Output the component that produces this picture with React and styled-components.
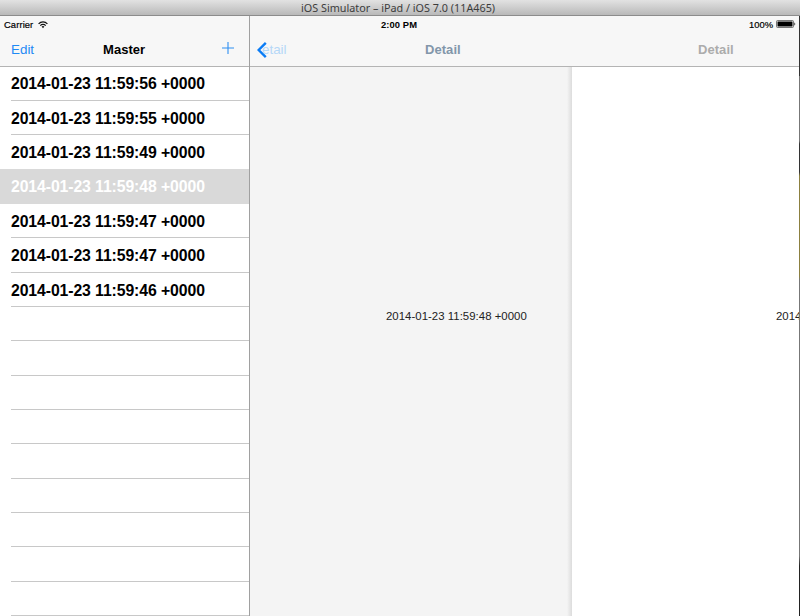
import styled, { createGlobalStyle } from "styled-components"

const GlobalStyle = createGlobalStyle`
  * {
    box-sizing: border-box;
  }

  body {
    margin: 0;
    overflow: hidden;
    background: #fff;
    font-family: "Liberation Sans", Arial, sans-serif;
    color: #000;
  }
`

const Window = styled.div`
  display: flex;
  flex-direction: column;
  width: 800px;
  height: 616px;
  overflow: hidden;
`

const TitleBar = styled.div`
  flex: none;
  height: 16px;
  padding-left: 301px;
  border-bottom: 1px solid #8c8c8c;
  background: linear-gradient(#e2e2e2, #b9b9b9);
  font-family: "Noto Sans", "Open Sans", sans-serif;
  font-size: 10.8px;
  line-height: 15px;
  white-space: nowrap;
  color: #3c3c3c;
`

const SplitView = styled.div`
  display: grid;
  grid-template-columns: 250px 549px 1px;
  flex: 1;
  min-height: 0;
`

const Panel = styled.section`
  display: flex;
  flex-direction: column;
  min-width: 0;
  min-height: 0;
  overflow: hidden;
  border-right: ${(props) => (props.$divided ? "1px solid #a0a0a0" : "none")};
`

const BarArea = styled.header`
  flex: none;
  height: 51px;
  border-bottom: 1px solid #b4b4b4;
  background: #f7f7f7;
`

const StatusBar = styled.div`
  display: flex;
  align-items: center;
  height: 17px;
  padding: 0 3px 0 4px;
  font-size: 9.4px;
  line-height: 17px;
  white-space: nowrap;

  svg {
    display: block;
  }
`

const Carrier = styled.span`
  margin-right: 5px;
  letter-spacing: 0.1px;
  -webkit-text-stroke: 0.2px #000;
`

const Time = styled.span`
  margin-left: 127px;
  font-weight: bold;
  letter-spacing: 0.1px;
`

const Battery = styled.span`
  display: flex;
  align-items: center;
  gap: 3px;
  margin-left: auto;
  -webkit-text-stroke: 0.2px #000;

  svg {
    margin-top: -1px;
  }
`

const NavBar = styled.div`
  display: flex;
  align-items: center;
  height: 33px;
  padding-left: ${(props) => props.$inset}px;
  font-size: 13px;
  line-height: 33px;
  white-space: nowrap;
`

const NavButton = styled.span`
  width: 92px;
  font-size: 13.4px;
  color: #1f8af5;
`

const NavTitle = styled.span`
  width: ${(props) => props.$width}px;
  font-weight: bold;
  letter-spacing: 0.05px;
  color: ${(props) => props.$color || "#000"};
`

const BackLabel = styled.span`
  width: 163px;
  margin-left: -5px;
  font-size: 13.4px;
  color: #b5d8f7;
`

const Table = styled.div`
  flex: 1;
  min-height: 0;
  overflow: hidden;
  background: #fff;
`

const RowList = styled.div`
  margin-top: -0.6px;
`

const Row = styled.div`
  height: 34.36px;
  padding-left: 11px;
  font-size: 15.8px;
  font-weight: bold;
  line-height: 35px;
  letter-spacing: -0.1px;
  white-space: nowrap;
  color: ${(props) => (props.$selected ? "#fff" : "#000")};
  background: ${(props) => (props.$selected ? "#d9d9d9" : "#fff")};
`

const RowBody = styled.div`
  height: 100%;
  border-bottom: 1px solid ${(props) => (props.$hideLine ? "transparent" : "#c8c8c8")};
`

const Pages = styled.div`
  display: flex;
  flex: 1;
  min-height: 0;
`

const Page = styled.div`
  width: ${(props) => props.$width}px;
  padding: 241px 0 0 ${(props) => props.$inset}px;
  overflow: hidden;
  font-size: 11.4px;
  line-height: 16px;
  letter-spacing: 0.03px;
  white-space: nowrap;
  color: #222;
  background: ${(props) => props.$background};
`

const ScreenEdge = styled.div`
  background: linear-gradient(
    #333 0 60px,
    #777 60px 125px,
    #333 128px 156px,
    #8c8040 160px 260px,
    #777 264px 540px,
    #222 550px
  );
`

const rows = [
  "2014-01-23 11:59:56 +0000",
  "2014-01-23 11:59:55 +0000",
  "2014-01-23 11:59:49 +0000",
  "2014-01-23 11:59:48 +0000",
  "2014-01-23 11:59:47 +0000",
  "2014-01-23 11:59:47 +0000",
  "2014-01-23 11:59:46 +0000",
]

const emptyRows = Array.from({ length: 9 }, () => "")
const selectedRow = 3

function WifiIcon() {
  return (
    <svg width="10" height="8" viewBox="0 0 10 8" fill="none" stroke="#111" strokeWidth="1.2">
      <path d="M0.6 2.9C3 0.2 7 0.2 9.4 2.9" />
      <path d="M2.3 4.6C3.8 3 6.2 3 7.7 4.6" />
      <path d="M3.6 5.6C4.4 4.9 5.6 4.9 6.4 5.6L5 7.2Z" fill="#111" stroke="none" />
    </svg>
  )
}

function BatteryIcon() {
  return (
    <svg width="20" height="8" viewBox="0 0 20 8">
      <rect x="0.5" y="0.5" width="17" height="7" rx="1" fill="none" stroke="#555" strokeWidth="0.8" />
      <rect x="1.5" y="1.5" width="15" height="5" fill="#000" />
      <path d="M18.3 2.4C19.6 2.8 19.6 5.2 18.3 5.6Z" fill="#333" />
    </svg>
  )
}

function PlusIcon() {
  return (
    <svg width="12" height="15" viewBox="0 0 12 15" stroke="#2f90f2" strokeWidth="1.1">
      <path d="M0 6H12M6 0V12" />
    </svg>
  )
}

function BackIcon() {
  return (
    <svg width="10" height="16" viewBox="0 0 10 16" fill="none" stroke="#0a7cf5" strokeWidth="2.4">
      <path d="M8.8 0.9L1.7 8L8.8 15.1" />
    </svg>
  )
}

export default function App() {
  return (
    <>
      <GlobalStyle />
      <Window>
        <TitleBar>iOS Simulator – iPad / iOS 7.0 (11A465)</TitleBar>

        <SplitView>
          <Panel $divided>
            <BarArea>
              <StatusBar>
                <Carrier>Carrier</Carrier>
                <WifiIcon />
              </StatusBar>
              <NavBar $inset={11}>
                <NavButton>Edit</NavButton>
                <NavTitle $width={119}>Master</NavTitle>
                <PlusIcon />
              </NavBar>
            </BarArea>
            <Table>
              <RowList>
                {[...rows, ...emptyRows].map((text, index) => (
                  <Row key={index} $selected={index === selectedRow}>
                    <RowBody $hideLine={index === selectedRow || index === selectedRow - 1}>
                      {text}
                    </RowBody>
                  </Row>
                ))}
              </RowList>
            </Table>
          </Panel>

          <Panel>
            <BarArea>
              <StatusBar>
                <Time>2:00 PM</Time>
                <Battery>
                  100%
                  <BatteryIcon />
                </Battery>
              </StatusBar>
              <NavBar $inset={7}>
                <BackIcon />
                <BackLabel>etail</BackLabel>
                <NavTitle $width={273} $color="#8296aa">Detail</NavTitle>
                <NavTitle $width={60} $color="#acacac">Detail</NavTitle>
              </NavBar>
            </BarArea>
            <Pages>
              <Page
                $width={322}
                $inset={136}
                $background="linear-gradient(to right, #f4f4f4 317px, #dcdcdc 322px)"
              >
                2014-01-23 11:59:48 +0000
              </Page>
              <Page $width={227} $inset={204} $background="#fff">
                2014-01-23 11:59:48 +0000
              </Page>
            </Pages>
          </Panel>

          <ScreenEdge />
        </SplitView>
      </Window>
    </>
  )
}
